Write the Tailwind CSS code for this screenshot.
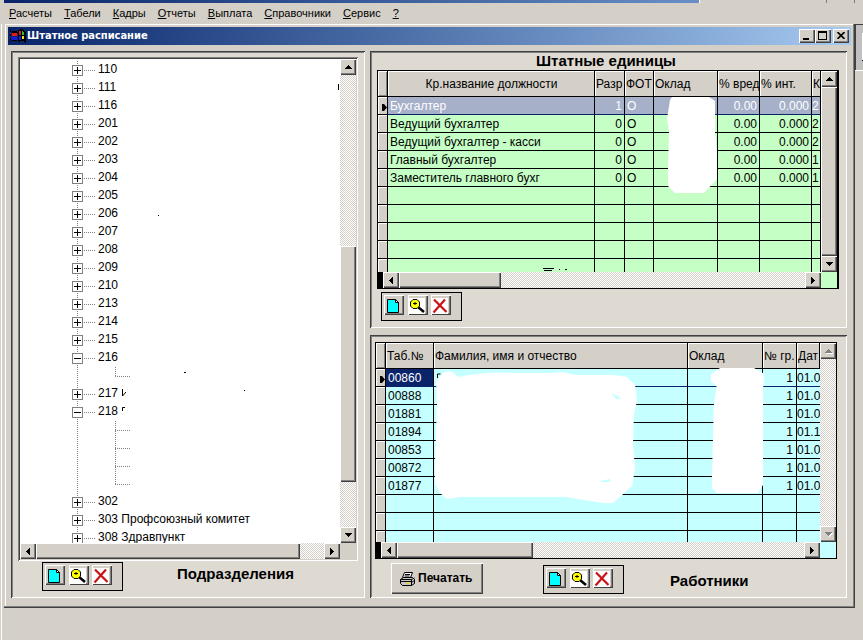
<!DOCTYPE html>
<html lang="ru">
<head>
<meta charset="utf-8">
<meta name="viewport" content="width=device-width, initial-scale=1">
<title>Штатное расписание</title>
<script src="https://cdn.jsdelivr.net/npm/@tailwindcss/browser@4"></script>
</head>
<body class="flex h-screen flex-col overflow-hidden bg-[#d4d0c8] font-['Liberation_Sans',Arial,sans-serif] text-[13px] leading-4 text-black">
<svg class="hidden">
  <symbol id="i-new" viewBox="0 0 16 16"><path d="M2.500 1.500h8l3 3v10h-11z" fill="#0ff" stroke="#000"/><path d="M10 2h1v1h1v1h1v1h-3z" fill="#fff"/><path d="M10.500 1.500v3h3" fill="none" stroke="#000"/></symbol>
  <symbol id="i-find" viewBox="0 0 16 16"><path d="M0 0h16v16H0z" fill="#fff"/><path d="M9 9l6 5" stroke="#000" stroke-width="2.500"/><path d="M4 1.500h4L10.500 4v4L8 10.500H4L1.500 8V4z" fill="#ff0" stroke="#000"/><path d="M4 5.500h4M6 4v3" stroke="#000"/></symbol>
  <symbol id="i-del" viewBox="0 0 16 16"><path d="M0 0h16v16H0z" fill="#fff"/><path d="M2 1.500L14.500 14M1.500 14.500L13 1.500" stroke="#c81414" stroke-width="2.200"/></symbol>
  <symbol id="a-up" viewBox="0 0 7 4"><path d="M3 0h1v1h1v1h1v1h1v1H0V3h1V2h1V1h1z" fill="currentColor"/></symbol>
  <symbol id="a-down" viewBox="0 0 7 4"><path d="M0 0h7v1H6v1H5v1H4v1H3V3H2V2H1V1H0z" fill="currentColor"/></symbol>
  <symbol id="a-left" viewBox="0 0 4 7"><path d="M4 0v7H3V6H2V5H1V4H0V3h1V2h1V1h1V0z" fill="currentColor"/></symbol>
  <symbol id="a-right" viewBox="0 0 4 7"><path d="M0 0h1v1h1v1h1v1h1v1H3v1H2v1H1v1H0z" fill="currentColor"/></symbol>
</svg>

<div class="flex h-[3px] shrink-0 pl-1">
  <div class="w-[696px] border-r border-white bg-linear-to-r from-[#0a246a] to-[#6a8fc6]"></div>
  <div class="w-[127px] border-r border-[#808080]"></div>
  <div class="w-7 border-r border-[#808080]"></div>
</div>

<nav class="flex h-[21px] shrink-0 items-center gap-3 pb-[2px] pl-[9px] text-[11px]">
  <button><u>Р</u>асчеты</button>
  <button><u>Т</u>абели</button>
  <button><u>К</u>адры</button>
  <button><u>О</u>тчеты</button>
  <button><u>В</u>ыплата</button>
  <button><u>С</u>правочники</button>
  <button><u>С</u>ервис</button>
  <button><u>?</u></button>
</nav>

<div class="flex min-h-0 flex-1 pl-px">
  <div class="w-[3px] shrink-0 border-l border-white"></div>
  <main class="mb-8 flex min-w-0 flex-1 flex-col p-1 pt-[3px] shadow-[inset_-1px_-1px_#404040,inset_-2px_-2px_#808080,inset_1px_0_#d4d0c8,inset_2px_1px_#fff]">
    <header class="flex h-[18px] shrink-0 items-center bg-linear-to-r from-[#0a246a] to-[#a6caf0] pr-[2px] pl-[2px]">
      <svg class="h-4 w-4" viewBox="0 0 16 16" aria-hidden="true" shape-rendering="crispEdges">
        <path d="M8 2h2V1h3v1h1v1h1v1h1v11h-1v-1h-1v-1h-4v1H8z" fill="#000"/><path d="M0 2h1v2H0zM2 3h5v1h1v1H2zM0 6h1v2H0zM0 10h1v2H0zM2 12h5v1H2zM0 13h1v1H0z" fill="#000"/>
        <path d="M2 5h5v3H2zM9 3h2v4H9z" fill="#e01818"/><path d="M12 3h1v1h1v3h-2z" fill="#20c030"/><path d="M2 9h5v3H2zM9 8h2v4H9z" fill="#1818e0"/><path d="M12 8h2v3h-2z" fill="#f0e020"/><path d="M0 5h1v1H0z" fill="#e01818"/><path d="M0 9h1v1H0z" fill="#1818e0"/>
      </svg>
      <h1 class="flex-1 pl-px font-['DejaVu_Sans_Condensed','DejaVu_Sans',sans-serif] text-[11px] font-bold text-white">Штатное расписание</h1>
      <button aria-label="Свернуть" class="flex h-[14px] w-4 items-end bg-[#d4d0c8] pb-[3px] pl-1 shadow-[inset_1px_1px_#fff,inset_-1px_-1px_#404040,inset_-2px_-2px_#808080]"><span class="h-[2px] w-[6px] bg-black"></span></button>
      <button aria-label="Развернуть" class="flex h-[14px] w-4 items-start bg-[#d4d0c8] pt-[2px] pl-[3px] shadow-[inset_1px_1px_#fff,inset_-1px_-1px_#404040,inset_-2px_-2px_#808080]"><span class="h-[9px] w-[9px] border border-t-2 border-black"></span></button>
      <button aria-label="Закрыть" class="ml-[2px] flex h-[14px] w-4 items-start bg-[#d4d0c8] pt-[3px] pl-1 shadow-[inset_1px_1px_#fff,inset_-1px_-1px_#404040,inset_-2px_-2px_#808080]"><svg class="h-[7px] w-2" viewBox="0 0 8 7"><path d="M.5 0L7.500 7M7.500 0L.5 7" stroke="#000" stroke-width="1.600"/></svg></button>
    </header>

    <div class="flex min-h-0 flex-1 gap-[5px] pt-[6px] pr-1 pb-[6px] pl-[3px]">
      <section class="flex w-[354px] shrink-0 flex-col bg-[#dedad2] px-[7px] pt-[6px] shadow-[inset_1px_1px_#404040,inset_-1px_-1px_#fff,inset_2px_2px_#808080]">
        <div class="flex min-h-0 flex-1 flex-col p-[2px] shadow-[inset_1px_1px_#808080,inset_-1px_-1px_#fff,inset_2px_2px_#404040,inset_-2px_-2px_#d4d0c8]">
          <div class="flex min-h-0 flex-1">
            <div class="relative flex-1 overflow-hidden bg-white">
              <ul id="tree" class="pt-[2px]"></ul>
              <svg class="absolute top-0 left-0 h-[480px] w-full" aria-hidden="true" shape-rendering="crispEdges"><path d="M318 25h1v6h-1zM138 156h1v1h-1zM164 313h2v1h-2zM224 331h1v1h-1z"/></svg>
            </div>
            <div class="flex w-4 flex-col bg-[repeating-conic-gradient(#d4d0c8_0_25%,#fff_0_50%)] bg-[length:2px_2px]">
              <button aria-label="Вверх" class="grid h-4 place-items-center bg-[#d4d0c8] shadow-[inset_1px_1px_#fff,inset_-1px_-1px_#404040,inset_-2px_-2px_#808080]"><svg class="h-1 w-[7px]"><use href="#a-up"/></svg></button>
              <div class="flex-[171]"></div>
              <div class="flex-[235] bg-[#d4d0c8] shadow-[inset_1px_1px_#fff,inset_-1px_-1px_#404040,inset_-2px_-2px_#808080]"></div>
              <div class="flex-[45]"></div>
              <button aria-label="Вниз" class="grid h-4 place-items-center bg-[#d4d0c8] shadow-[inset_1px_1px_#fff,inset_-1px_-1px_#404040,inset_-2px_-2px_#808080]"><svg class="h-1 w-[7px]"><use href="#a-down"/></svg></button>
            </div>
          </div>
          <div class="flex h-4 bg-[#d4d0c8] pr-4">
            <button aria-label="Влево" class="grid w-4 place-items-center bg-[#d4d0c8] shadow-[inset_1px_1px_#fff,inset_-1px_-1px_#404040,inset_-2px_-2px_#808080]"><svg class="h-[7px] w-1"><use href="#a-left"/></svg></button>
            <div class="flex-[264] bg-[#d4d0c8] shadow-[inset_1px_1px_#fff,inset_-1px_-1px_#404040,inset_-2px_-2px_#808080]"></div>
            <div class="flex-[24] bg-[repeating-conic-gradient(#d4d0c8_0_25%,#fff_0_50%)] bg-[length:2px_2px]"></div>
            <button aria-label="Вправо" class="grid w-4 place-items-center bg-[#d4d0c8] shadow-[inset_1px_1px_#fff,inset_-1px_-1px_#404040,inset_-2px_-2px_#808080]"><svg class="h-[7px] w-1"><use href="#a-right"/></svg></button>
          </div>
        </div>
        <div class="flex h-[37px] shrink-0 items-start pt-px pl-6">
          <div data-tools></div>
          <h2 class="pt-1 pl-[54px] text-[15px] font-bold">Подразделения</h2>
        </div>
      </section>

      <div class="flex min-w-0 flex-1 flex-col gap-[7px]">
        <section class="flex min-h-0 flex-[277] flex-col bg-[#dedad2] pr-2 pl-[7px] shadow-[inset_1px_1px_#404040,inset_-1px_-1px_#fff,inset_2px_2px_#808080]">
          <h2 class="pt-[2px] pb-px pr-1 text-center text-[15px] font-bold">Штатные единицы</h2>
          <div class="flex min-h-0 flex-1 flex-col border border-r-2 border-black bg-[#c6ffc6]">
            <div class="flex min-h-0 flex-1">
              <div class="relative min-w-0 flex-1 overflow-hidden">
                <table class="w-full table-fixed border-separate border-spacing-0">
                  <colgroup><col class="w-[10px]"><col class="w-[207px]"><col class="w-[30px]"><col class="w-[29px]"><col class="w-[64px]"><col class="w-[42px]"><col class="w-[52px]"><col></colgroup>
                  <thead><tr id="units-head" class="h-[26px]"></tr></thead>
                  <tbody id="units"></tbody>
                </table>
                <svg class="absolute top-0 left-0 h-[202px] w-full" aria-hidden="true">
                  <path d="M294 26L331 26L337 30V62L339 80V108L326 122H297L290 115V98L291 60L289 48L292 29z" fill="#fff"/>
                  <path d="M165 197h11v1h-11zM166 199h8v1h-8zM181 198h1v1h-1zM187 198h2v1h-2z"/>
                </svg>
              </div>
              <div class="flex w-4 flex-col">
                <button aria-label="Вверх" class="grid h-4 place-items-center bg-[#d4d0c8] shadow-[inset_1px_1px_#fff,inset_-1px_-1px_#404040,inset_-2px_-2px_#808080]"><svg class="h-1 w-[7px]"><use href="#a-up"/></svg></button>
                <div class="flex-1 bg-[#d4d0c8] shadow-[inset_1px_1px_#fff,inset_-1px_-1px_#404040,inset_-2px_-2px_#808080]"></div>
                <button aria-label="Вниз" class="grid h-4 place-items-center bg-[#d4d0c8] shadow-[inset_1px_1px_#fff,inset_-1px_-1px_#404040,inset_-2px_-2px_#808080]"><svg class="h-1 w-[7px]"><use href="#a-down"/></svg></button>
              </div>
            </div>
            <div class="mr-4 flex h-4 bg-[repeating-conic-gradient(#d4d0c8_0_25%,#fff_0_50%)] bg-[length:2px_2px]">
              <div class="w-[5px] bg-black"></div>
              <button aria-label="Влево" class="grid w-4 place-items-center bg-[#d4d0c8] shadow-[inset_1px_1px_#fff,inset_-1px_-1px_#404040,inset_-2px_-2px_#808080]"><svg class="h-[7px] w-1"><use href="#a-left"/></svg></button>
              <div class="flex-[102] bg-[#d4d0c8] shadow-[inset_1px_1px_#fff,inset_-1px_-1px_#404040,inset_-2px_-2px_#808080]"></div>
              <div class="flex-[305]"></div>
              <button aria-label="Вправо" class="grid w-4 place-items-center bg-[#d4d0c8] shadow-[inset_1px_1px_#fff,inset_-1px_-1px_#404040,inset_-2px_-2px_#808080]"><svg class="h-[7px] w-1"><use href="#a-right"/></svg></button>
            </div>
          </div>
          <div class="h-[39px] shrink-0 pt-[3px] pl-1"><div data-tools class="w-fit"></div></div>
        </section>

        <section class="flex min-h-0 flex-[263] flex-col bg-[#dedad2] pr-[10px] pl-[5px] shadow-[inset_1px_1px_#404040,inset_-1px_-1px_#fff,inset_2px_2px_#808080]">
          <div class="mt-[7px] flex min-h-0 flex-1 flex-col border border-black bg-[#c6ffff]">
            <div class="flex min-h-0 flex-1">
              <div class="relative min-w-0 flex-1 overflow-hidden">
                <table class="w-full table-fixed border-separate border-spacing-0">
                  <colgroup><col class="w-[10px]"><col class="w-[48px]"><col class="w-[254px]"><col class="w-[75px]"><col class="w-[34px]"><col></colgroup>
                  <thead><tr id="staff-head" class="h-[26px]"></tr></thead>
                  <tbody id="staff"></tbody>
                </table>
                <svg class="absolute top-0 left-0 h-[202px] w-full" aria-hidden="true">
                  <path d="M66 31Q74 25 82 34Q110 28 140 30H176L185 29L200 32H237L251 34L259 42L261 58L258 70L257 100L259 126L256 143L246 152L237 160H228L214 158L190 154H84L71 156L64 150L59 140V120L61 60L60 38z" fill="#fff"/>
                  <path d="M61.500 35v-4h3" fill="none" stroke="#000"/>
                  <path d="M236 51l5 1l4 4l-5 0zM224 138l10-2v3h-9z" fill="#c6ffff"/>
                  <path d="M344 25H378L387 30L388 38L387 45V142L382 150H341L336 145V130L338 60L341 44L335 38V31z" fill="#fff"/>
                </svg>
              </div>
              <div class="flex w-4 flex-col justify-between bg-[repeating-conic-gradient(#d4d0c8_0_25%,#fff_0_50%)] bg-[length:2px_2px] text-[#808080]">
                <button disabled aria-label="Вверх" class="grid h-4 place-items-center bg-[#d4d0c8] shadow-[inset_1px_1px_#fff,inset_-1px_-1px_#404040,inset_-2px_-2px_#808080]"><svg class="h-1 w-[7px] drop-shadow-[1px_1px_0_#fff]"><use href="#a-up"/></svg></button>
                <button disabled aria-label="Вниз" class="grid h-4 place-items-center bg-[#d4d0c8] shadow-[inset_1px_1px_#fff,inset_-1px_-1px_#404040,inset_-2px_-2px_#808080]"><svg class="h-1 w-[7px] drop-shadow-[1px_1px_0_#fff]"><use href="#a-down"/></svg></button>
              </div>
            </div>
            <div class="mr-4 flex h-4 bg-[repeating-conic-gradient(#d4d0c8_0_25%,#fff_0_50%)] bg-[length:2px_2px]">
              <div class="w-[5px] bg-black"></div>
              <button aria-label="Влево" class="grid w-4 place-items-center bg-[#d4d0c8] shadow-[inset_1px_1px_#fff,inset_-1px_-1px_#404040,inset_-2px_-2px_#808080]"><svg class="h-[7px] w-1"><use href="#a-left"/></svg></button>
              <div class="flex-[136] bg-[#d4d0c8] shadow-[inset_1px_1px_#fff,inset_-1px_-1px_#404040,inset_-2px_-2px_#808080]"></div>
              <div class="flex-[271]"></div>
              <button aria-label="Вправо" class="grid w-4 place-items-center bg-[#d4d0c8] shadow-[inset_1px_1px_#fff,inset_-1px_-1px_#404040,inset_-2px_-2px_#808080]"><svg class="h-[7px] w-1"><use href="#a-right"/></svg></button>
            </div>
          </div>
          <div class="flex h-[39px] shrink-0 items-start pt-1 pl-4">
            <button class="flex h-[31px] w-[92px] items-center gap-[2px] bg-[#d4d0c8] pl-2 font-bold shadow-[inset_1px_1px_#fff,inset_-1px_-1px_#404040,inset_-2px_-2px_#808080]">
              <svg class="h-4 w-[17px] shrink-0" viewBox="0 0 17 16" aria-hidden="true"><path d="M5.500 1.500h8l-2 5h-8z" fill="#fff" stroke="#000"/><path d="M6 3.500h5M5.500 5h5" stroke="#000"/><path d="M1.500 8.500l3-2h9l2 2v4l-3 2h-9l-2-2z" fill="#c8c8c8" stroke="#000"/><path d="M1.500 8.500h11v6M12.500 8.500l3-1.500M2 10.500h10M12 12l4-3" fill="none" stroke="#000"/><path d="M7 11.500h4v1H7z" fill="#f0e000"/></svg>
              <span class="pb-[2px] text-[12px]">Печатать</span>
            </button>
            <div data-tools class="mt-[2px] ml-[60px]"></div>
            <h2 class="pt-[10px] pl-[46px] text-[15px] font-bold">Работники</h2>
          </div>
        </section>
      </div>
    </div>
  </main>
  <aside class="w-2 shrink-0">
    <div class="h-[46px] border-t border-l border-[#404040] bg-[#c0c0c0] pt-2 pl-[6px]"><div class="h-7 border-b border-black bg-white"></div></div>
    <div class="h-px bg-white"></div>
  </aside>
</div>

<script>
const toolButton = (label, icon, gap) => `<button aria-label="${label}" class="bg-[#d4d0c8] size-5 pt-px pl-px shadow-[inset_1px_1px_#fff,inset_-1px_-1px_#404040,inset_-2px_-2px_#808080] ${gap}"><svg class="size-4"><use href="#${icon}"/></svg></button>`;
document.querySelectorAll('[data-tools]').forEach(el => {
  el.innerHTML = `<div class="flex h-[29px] w-[81px] items-start border border-black bg-[#d4d0c8] pt-[2px] pl-[2px]">${toolButton('Добавить', 'i-new', '')}${toolButton('Найти', 'i-find', 'ml-1')}${toolButton('Удалить', 'i-del', 'ml-[3px]')}</div>`;
});

const nodes = ['+110','+111','+116','+201','+202','+203','+204','+205','+206','+207','+208','+209','+210','+213','+214','+215','-216','.','+217','-218',',',',',',','.','+302','+303 Профсоюзный комитет','+308 Здравпункт'];
const rest = {
  '217': '<svg class="ml-1 h-2 w-1" viewBox="0 0 4 8"><path d="M.5 0v7L4 3" fill="none" stroke="#000"/></svg>',
  '218': '<svg class="mb-1 ml-1 h-1 w-1" viewBox="0 0 4 4"><path d="M.5 4V.5H3" fill="none" stroke="#000"/></svg>'
};
const trunk = '<span class="absolute top-0 left-[57px] h-[18px] w-px bg-[repeating-linear-gradient(#808080_0_1px,#fff_1px_2px)]"></span>';
document.getElementById('tree').innerHTML = nodes.map(n => {
  const kind = n[0], text = n.slice(1);
  if (kind === '.' || kind === ',') {
    const tall = kind === ',' ? 'h-[18px]' : 'h-[10px]';
    return `<li class="relative h-[18px]">${trunk}<span class="absolute top-0 left-[95px] w-px bg-[repeating-linear-gradient(#808080_0_1px,#fff_1px_2px)] ${tall}"></span><span class="absolute top-[9px] left-[95px] h-px w-[15px] bg-[repeating-linear-gradient(90deg,#808080_0_1px,#fff_1px_2px)]"></span></li>`;
  }
  const plus = kind === '+' ? '<path d="M4.500 1v7" stroke="#000"/>' : '';
  return `<li class="relative flex h-[18px] items-center pl-[52px]">${trunk}<button aria-label="${kind === '+' ? 'Развернуть' : 'Свернуть'} ${text}" class="relative size-[11px] border border-[#808080] bg-white"><svg class="size-[9px]" viewBox="0 0 9 9"><path d="M1 4.500h7" stroke="#000"/>${plus}</svg></button><span class="ml-px h-px w-3 bg-[repeating-linear-gradient(90deg,#808080_0_1px,#fff_1px_2px)]"></span><span class="flex items-center pb-[2px] pl-[2px] text-[12px] whitespace-nowrap">${text}${rest[text] || ''}</span></li>`;
}).join('');

const headCells = (names, centered) => '<td class="border-r border-b border-black bg-[#d4d0c8] p-0 shadow-[inset_1px_1px_#fff,inset_-1px_-1px_#808080]"></td>' + names.map((n, i) =>
  `<th scope="col" class="overflow-hidden border-r border-b border-black bg-[#d4d0c8] p-0 pl-px text-[12px] font-normal whitespace-nowrap shadow-[inset_1px_1px_#fff] ${centered && i === 0 ? 'text-center' : 'text-left'}">${n}</th>`).join('');
const marker = first => `<td class="border-r border-b border-black bg-[#d4d0c8] p-0 shadow-[inset_1px_1px_#fff]">${first ? '<svg class="mt-[3px] ml-1 h-[7px] w-[5px]" viewBox="0 0 5 7"><path d="M0 0h2l3 3.500L2 7H0z"/></svg>' : ''}</td>`;

document.getElementById('units-head').innerHTML = headCells(['Кр.название должности','Разр','ФОТ','Оклад','% вред','% инт.','К'], true);
const units = [['Бухгалтер','1','О','','0.00','0.000','2'],['Ведущий бухгалтер','0','О','','0.00','0.000','2'],['Ведущий бухгалтер - касси','0','О','','0.00','0.000','2'],['Главный бухгалтер','0','О','','0.00','0.000','1'],['Заместитель главного бухг','0','О','','0.00','0.000','1']];
const blank = n => Array(n).fill('');
document.getElementById('units').innerHTML = Array.from({length: 10}, (_, r) => {
  const row = units[r] || blank(7);
  return `<tr class="h-[18px]">${marker(r === 0)}` + row.map((v, c) =>
    `<td class="overflow-hidden border-r border-b p-0 text-[12px] whitespace-nowrap ${r === 0 ? 'border-r-black border-b-[#0a246a] bg-[#a6b0c9] text-white' : 'border-black'} ${[1, 4, 5].includes(c) ? 'pr-[2px] text-right' : c === 6 ? '' : 'pl-[2px]'}">${v}</td>`).join('') + '</tr>';
}).join('');

document.getElementById('staff-head').innerHTML = headCells(['Таб.№','Фамилия, имя и отчество','Оклад','№ гр.','Дат'], false);
const staff = [['00860','01.0'],['00888','01.0'],['01881','01.0'],['01894','01.1'],['00853','01.0'],['00872','01.0'],['01877','01.0']].map(([id, d]) => [id, '', '', '1', d]);
document.getElementById('staff').innerHTML = Array.from({length: 10}, (_, r) => {
  const row = staff[r] || blank(5);
  return `<tr class="h-[18px]">${marker(r === 0)}` + row.map((v, c) =>
    `<td class="overflow-hidden border-b p-0 text-[12px] whitespace-nowrap ${c === 4 ? '' : 'border-r'} ${r === 0 ? 'border-r-black border-b-[#0a246a]' : 'border-black'} ${r === 0 && c === 0 ? 'bg-[#0a246a] text-white' : ''} ${c === 3 ? 'pr-[3px] text-right' : c === 4 ? '' : 'pl-[2px]'}">${v}</td>`).join('') + '</tr>';
}).join('');
</script>
</body>
</html>
